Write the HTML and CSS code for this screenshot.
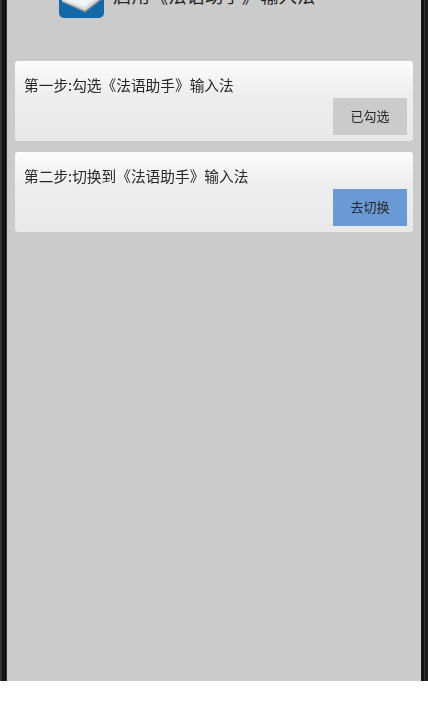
FILE: index.html
```html
<!DOCTYPE html>
<html lang="zh">
<head>
<meta charset="utf-8">
<title>启用《法语助手》输入法</title>
<link rel="stylesheet" href="styles.css">
</head>
<body>
<div class="frame">
  <div class="edge edge-left"></div>
  <main class="content">
    <header class="header">
      <svg class="logo" viewBox="0 0 45 45" aria-hidden="true">
        <rect width="45" height="45" rx="5" fill="#1268a8"/>
        <path d="M3 0 L3 29 L26 39.5 L45 25 L45 0 Z" fill="#8f9396"/>
        <path d="M3 0 L3 28 L26 37.5 L45 23 L45 0 Z" fill="#d9dbdc"/>
        <path d="M3 0 L3 26 L25 34 L45 20 L45 0 Z" fill="#f2f4f5"/>
      </svg>
      <h1 class="title">启用《法语助手》输入法</h1>
    </header>
    <section class="card">
      <p class="step">第一步:勾选《法语助手》输入法</p>
      <div class="actions"><span class="btn btn-done">已勾选</span></div>
    </section>
    <section class="card">
      <p class="step">第二步:切换到《法语助手》输入法</p>
      <div class="actions"><span class="btn btn-go">去切换</span></div>
    </section>
  </main>
  <div class="edge edge-right"></div>
</div>
</body>
</html>
```
FILE: styles.css
```css
html, body {
  margin: 0;
  padding: 0;
  background: #fff;
}
body {
  height: 720px;
  overflow: hidden;
  font-family: "Noto Sans CJK SC", "Liberation Sans", sans-serif;
  color: #262626;
}
.frame {
  height: 681px;
  display: flex;
  filter: blur(0.35px);
}
.edge {
  width: 7px;
  flex-shrink: 0;
}
.edge-left {
  background: linear-gradient(90deg, #333 0, #333 2px, #141414 2px, #141414 6px, #333 6px);
}
.edge-right {
  background: linear-gradient(90deg, #141414 0, #141414 3px, #333 3px, #333 4px, #1a1a1a 4px);
}
.content {
  flex: 1;
  min-width: 0;
  background: #cbcbcb;
  display: flex;
  flex-direction: column;
  gap: 11px;
}
.header {
  height: 50px;
  box-sizing: border-box;
  padding-left: 52px;
  padding-bottom: 32px;
  display: flex;
  align-items: flex-end;
  gap: 9px;
  overflow: hidden;
  flex-shrink: 0;
}
.logo {
  width: 45px;
  height: 45px;
  flex-shrink: 0;
}
.title {
  margin: 0 0 10px;
  font-size: 18.4px;
  font-weight: 400;
  line-height: 26px;
  white-space: nowrap;
}
.card {
  margin: 0 8px;
  height: 80px;
  box-sizing: border-box;
  padding: 13px 6px 6px 9px;
  border-radius: 3px;
  background: linear-gradient(#fcfcfc 0, #eeeeee 40%, #e8e8e8 100%);
  display: flex;
  flex-direction: column;
  justify-content: space-between;
}
.step {
  margin: 0;
  font-size: 14.7px;
  line-height: 22px;
}
.actions {
  display: flex;
  justify-content: flex-end;
}
.btn {
  width: 74px;
  height: 37px;
  padding-bottom: 2px;
  box-sizing: border-box;
  display: flex;
  align-items: center;
  justify-content: center;
  font-size: 13px;
}
.btn-done {
  background: #cbcbcb;
}
.btn-go {
  background: #6a9ad6;
}
```
